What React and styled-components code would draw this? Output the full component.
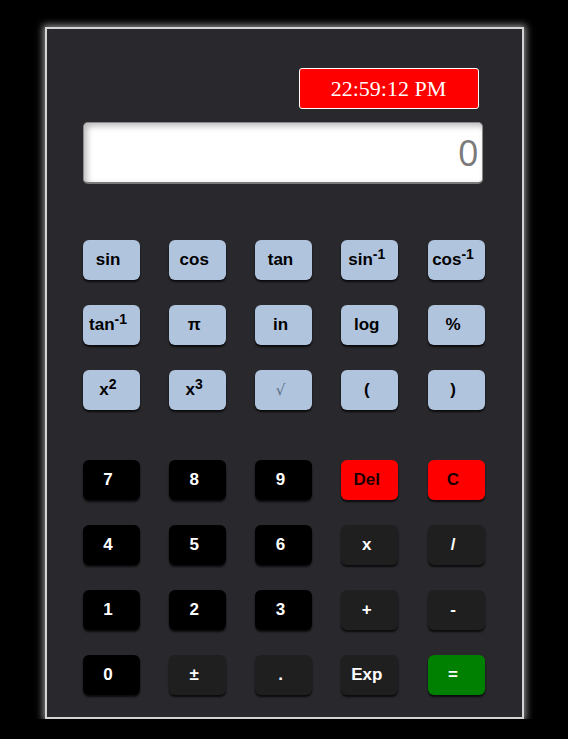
import React from "react";
import styled, { createGlobalStyle } from "styled-components";

const Global = createGlobalStyle`
  html, body { margin: 0; padding: 0; background: #000; }
  body { font-family: "Liberation Sans", Arial, sans-serif; }
`;

const Page = styled.div`
  padding-top: 27px;
  display: flex;
  justify-content: center;
`;

const Panel = styled.div`
  box-sizing: border-box;
  width: 479px;
  height: 692px;
  background: #29282d;
  border: 2px solid #d4d4d4;
  box-shadow: 0 0 7px 2px rgba(255, 255, 255, 0.55);
  padding: 39px 37px 0 36px;
  display: flex;
  flex-direction: column;
`;

const ClockRow = styled.div`
  display: flex;
  justify-content: flex-end;
  padding-right: 6px;
`;

const Clock = styled.div`
  box-sizing: border-box;
  width: 180px;
  height: 41px;
  background: #ff0000;
  border: 1px solid #ffffff;
  border-radius: 3px;
  color: #fff;
  font-family: "Liberation Serif", "Times New Roman", serif;
  font-size: 22px;
  display: flex;
  align-items: center;
  justify-content: center;
`;

const Display = styled.div`
  box-sizing: border-box;
  margin-top: 13px;
  width: 400px;
  height: 62px;
  background: #fff;
  border: 1px solid #8a8a8a;
  border-bottom: 2px solid #7a7a7a;
  border-radius: 5px;
  box-shadow: inset 3px 3px 6px rgba(0, 0, 0, 0.28);
  color: #7b7b7b;
  font-family: "Open Sans", "Liberation Sans", sans-serif;
  font-size: 36px;
  display: flex;
  align-items: center;
  justify-content: flex-end;
  padding-right: 3px;
`;

const Keys = styled.div`
  width: 402px;
  display: grid;
  grid-template-columns: repeat(5, 57px);
  justify-content: space-between;
  row-gap: 25px;
  margin-top: ${(p) => p.$top}px;
`;

const palette = {
  sci: { bg: "#b0c4de", fg: "#000" },
  num: { bg: "#000", fg: "#fff" },
  op: { bg: "#1f1f1f", fg: "#fff" },
  red: { bg: "#ff0000", fg: "#1a0000" },
  eq: { bg: "#008000", fg: "#fff" },
};

const Key = styled.button`
  box-sizing: border-box;
  width: 57px;
  height: 40px;
  border: none;
  border-radius: 6px;
  padding: 0 6px 0 0;
  background: ${(p) => palette[p.$kind].bg};
  color: ${(p) => palette[p.$kind].fg};
  box-shadow: 0 2px 2px rgba(0, 0, 0, 0.75);
  font-family: "Liberation Sans", Arial, sans-serif;
  font-weight: bold;
  font-size: 17px;
  display: flex;
  align-items: center;
  justify-content: center;
  white-space: nowrap;
  sup {
    font-size: 14px;
    line-height: 0;
    position: relative;
    top: -6px;
    vertical-align: baseline;
  }
`;

const Root = styled.span`
  font-family: "DejaVu Sans", sans-serif;
  font-weight: normal;
  font-size: 15px;
  color: #5d6f84;
`;

const sci = [
  ["sin"],
  ["cos"],
  ["tan"],
  ["sin", "-1"],
  ["cos", "-1"],
  ["tan", "-1"],
  ["π"],
  ["in"],
  ["log"],
  ["%"],
  ["x", "2"],
  ["x", "3"],
  ["root"],
  ["("],
  [")"],
];

const basic = [
  ["7", "num"], ["8", "num"], ["9", "num"], ["Del", "red"], ["C", "red"],
  ["4", "num"], ["5", "num"], ["6", "num"], ["x", "op"], ["/", "op"],
  ["1", "num"], ["2", "num"], ["3", "num"], ["+", "op"], ["-", "op"],
  ["0", "num"], ["±", "op"], [".", "op"], ["Exp", "op"], ["=", "eq"],
];

export default function App() {
  return (
    <>
      <Global />
      <Page>
        <Panel>
          <ClockRow>
            <Clock>22:59:12 PM</Clock>
          </ClockRow>
          <Display>0</Display>
          <Keys $top={56}>
            {sci.map(([t, s], i) => (
              <Key key={i} $kind="sci">
                {t === "root" ? <Root>√</Root> : t}
                {s && <sup>{s}</sup>}
              </Key>
            ))}
          </Keys>
          <Keys $top={50}>
            {basic.map(([t, k], i) => (
              <Key key={i} $kind={k}>
                {t}
              </Key>
            ))}
          </Keys>
        </Panel>
      </Page>
    </>
  );
}
